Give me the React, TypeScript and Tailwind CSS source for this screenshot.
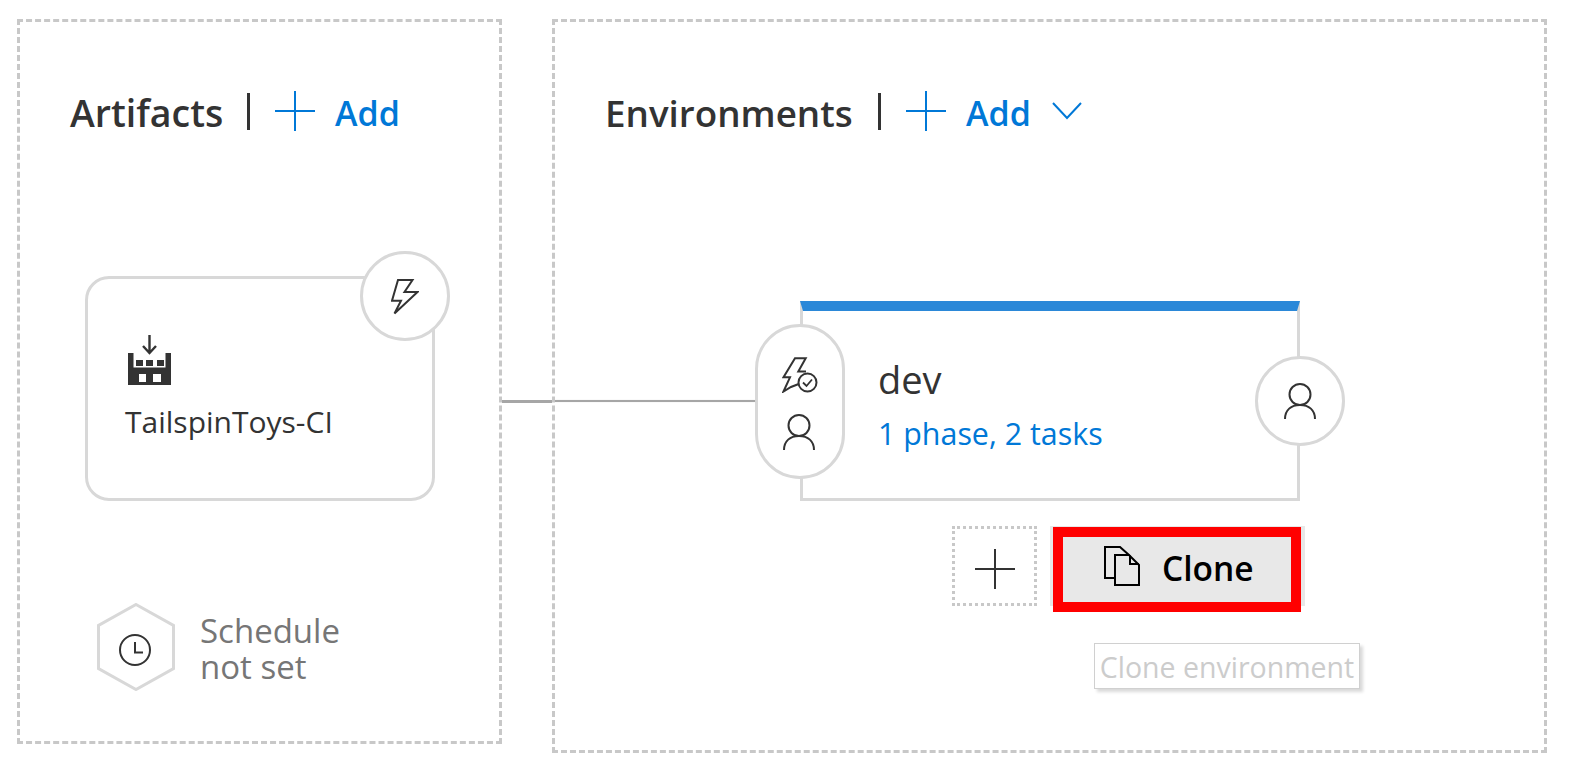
import React from "react";

const Plus = ({ color }: { color: string }) => (
  <svg width="40" height="40" viewBox="0 0 40 40" className="block shrink-0">
    <path d="M20 0V40M0 20H40" stroke={color} strokeWidth="2" fill="none" />
  </svg>
);

const Person = () => (
  <svg width="32" height="36" viewBox="0 0 32 36" className="block">
    <circle cx="16" cy="11.5" r="10.5" stroke="#333" strokeWidth="2" fill="none" />
    <path d="M1 36C1 27 7 22 16 22S31 27 31 36" stroke="#333" strokeWidth="2" fill="none" />
  </svg>
);

const Factory = () => (
  <svg width="43" height="50" viewBox="0 0 43 50" className="block">
    <path d="M21.5 0V17M15 11L21.5 18L28 11" stroke="#333" strokeWidth="2.4" fill="none" />
    <path
      fillRule="evenodd"
      fill="#333"
      d="M0 18H5.5V32.5H37.5V18H43V50H0ZM11 39V47H18V39ZM25 39V47H33V39Z"
    />
    <rect x="8" y="25" width="7" height="6" fill="#333" />
    <rect x="18" y="25" width="7" height="6" fill="#333" />
    <rect x="29" y="25" width="7" height="6" fill="#333" />
  </svg>
);

const Bolt = () => (
  <svg width="28" height="36" viewBox="0 0 28 36" className="block">
    <path
      d="M7 1H21.5L13.5 13H26.5L3.5 34.5L10 21.7H1Z"
      stroke="#333"
      strokeWidth="2"
      fill="none"
      strokeLinejoin="miter"
    />
  </svg>
);

const BoltCheck = () => (
  <svg width="38" height="36" viewBox="0 0 38 36" className="block">
    <path
      d="M18 26.5L9 30L1.5 34.5L8 20.3H1.5L13 1.3H23.7L16.3 14.5H24"
      stroke="#333"
      strokeWidth="2"
      fill="none"
    />
    <circle cx="25.5" cy="25.5" r="9" stroke="#333" strokeWidth="2" fill="#fff" />
    <path d="M21 25.5L24.5 29L30 22.5" stroke="#333" strokeWidth="1.8" fill="none" />
  </svg>
);

const Clock = () => (
  <svg width="34" height="34" viewBox="0 0 34 34" className="block">
    <circle cx="17" cy="17" r="15" stroke="#333" strokeWidth="2" fill="none" />
    <path d="M17 9V19.5H25" stroke="#333" strokeWidth="2" fill="none" />
  </svg>
);

const Copy = () => (
  <svg width="36" height="41" viewBox="0 0 36 41" className="block shrink-0">
    <path d="M11 32H1V1H16L25 9" stroke="#000" strokeWidth="2" fill="none" />
    <path d="M11 9H25L35 19V39H11Z" stroke="#000" strokeWidth="2" fill="none" />
    <path d="M26 9.5V18H35" stroke="#000" strokeWidth="2" fill="none" />
  </svg>
);

const Hexagon = () => (
  <svg width="78" height="88" viewBox="0 0 78 88" className="absolute inset-0">
    <path d="M39 1.5L76.5 22.5V65.5L39 86.5L1.5 65.5V22.5Z" stroke="#d8d8d8" strokeWidth="3" fill="#fff" />
  </svg>
);

export default function App() {
  return (
    <div className="relative flex h-[778px] w-[1574px] items-start overflow-hidden bg-white pl-[17px] pt-[19px] font-['Open_Sans',sans-serif] text-[#333]">
      {/* Artifacts panel */}
      <section className="h-[725px] w-[485px] shrink-0 border-[3px] border-dashed border-[#c8c8c8]">
        <header className="ml-[50px] mt-[69px] flex h-[40px] items-center">
          <h2 className="mt-[4px] w-[157px] text-[37.5px] font-semibold leading-[40px]">Artifacts</h2>
          <span className="ml-[20px] h-[37px] w-[3px] bg-[#333]" />
          <span className="ml-[25px]">
            <Plus color="#0078d7" />
          </span>
          <span className="ml-[20px] mt-[3px] text-[34px] font-semibold leading-[40px] text-[#0078d7]">Add</span>
        </header>

        <div className="relative ml-[65px] mt-[145px] flex h-[225px] w-[350px] flex-col rounded-[24px] border-[3px] border-[#d8d8d8] pl-[40px] pt-[56px]">
          <Factory />
          <div className="-ml-[3px] mt-[17px] text-[30px] leading-[40px]">TailspinToys-CI</div>
          <div className="absolute -right-[18px] -top-[28px] flex h-[90px] w-[90px] items-center justify-center rounded-full border-[3px] border-[#d8d8d8] bg-white pt-[1px]">
            <Bolt />
          </div>
        </div>

        <div className="ml-[77px] mt-[102px] flex items-center">
          <div className="relative flex h-[88px] w-[78px] shrink-0 items-center justify-center">
            <Hexagon />
            <span className="relative -ml-[2px] mt-[6px]">
              <Clock />
            </span>
          </div>
          <div className="ml-[25px] mt-[3px] w-[160px] text-[33px] leading-[36px] text-[#767676]">Schedule not set</div>
        </div>
      </section>

      {/* Environments panel */}
      <section className="ml-[50px] h-[734px] w-[995px] shrink-0 border-[3px] border-dashed border-[#c8c8c8]">
        <header className="ml-[50px] mt-[69px] flex h-[40px] items-center">
          <h2 className="mt-[4px] w-[252px] text-[36.8px] font-semibold leading-[40px]">Environments</h2>
          <span className="ml-[21px] h-[37px] w-[3px] bg-[#333]" />
          <span className="ml-[25px]">
            <Plus color="#0078d7" />
          </span>
          <span className="ml-[20px] mt-[3px] text-[34px] font-semibold leading-[40px] text-[#0078d7]">Add</span>
          <svg width="30" height="18" viewBox="0 0 30 18" className="ml-[21px] block">
            <path d="M1 1L15 16L29 1" stroke="#0078d7" strokeWidth="2" fill="none" />
          </svg>
        </header>

        <div className="relative ml-[245px] mt-[170px] flex h-[200px] w-[500px] flex-col justify-center border-x-[3px] border-b-[3px] border-t-[10px] border-x-[#d8d8d8] border-b-[#d8d8d8] border-t-[#2b88d8] pl-[75px]">
          <div className="-mt-[1px] text-[38px] leading-[48px]">dev</div>
          <div className="mt-[11px] text-[30.4px] leading-[40px] text-[#0078d7]">1 phase, 2 tasks</div>

          <div className="absolute -left-[48px] top-[13px] flex h-[155px] w-[90px] flex-col items-center rounded-full border-[3px] border-[#d8d8d8] bg-white pt-[30px]">
            <span className="ml-[2px]">
              <BoltCheck />
            </span>
            <span className="-ml-[2px] mt-[21px]">
              <Person />
            </span>
          </div>
          <div className="absolute -right-[48px] top-[45px] flex h-[90px] w-[90px] items-center justify-center rounded-full border-[3px] border-[#d8d8d8] bg-white">
            <Person />
          </div>
        </div>

        <div className="ml-[397px] mt-[25px] flex">
          <div className="flex h-[80px] w-[85px] items-center justify-center border-[3px] border-dotted border-[#c8c8c8] pt-[6px]">
            <Plus color="#333" />
          </div>
          <div className="relative ml-[13px] flex h-[80px] w-[255px] items-center bg-[#e8e8e8] pl-[54px]">
            <Copy />
            <span className="ml-[22px] mt-[4px] text-[33.5px] font-semibold leading-[40px] text-black">Clone</span>
            <div className="absolute left-[3px] top-[1px] h-[85px] w-[248px] border-[10px] border-[#ff0000]" />
          </div>
        </div>

        <div className="ml-[539px] mt-[37px] flex h-[46px] w-[266px] items-center justify-center border border-[#d0d0d0] bg-white pt-[2px] text-[28.5px] leading-[40px] text-[#cccccc] shadow-[3px_3px_3px_rgba(0,0,0,0.15)]">
          Clone environment
        </div>
      </section>

      {/* Connector between artifact and environment */}
      <div className="absolute left-[502px] top-[400px] h-[3px] w-[50px] bg-[#a6a6a6]" />
      <div className="absolute left-[555px] top-[400px] h-[2px] w-[200px] bg-[#a6a6a6] shadow-[0_0_1px_rgba(0,0,0,0.2)]" />
    </div>
  );
}
